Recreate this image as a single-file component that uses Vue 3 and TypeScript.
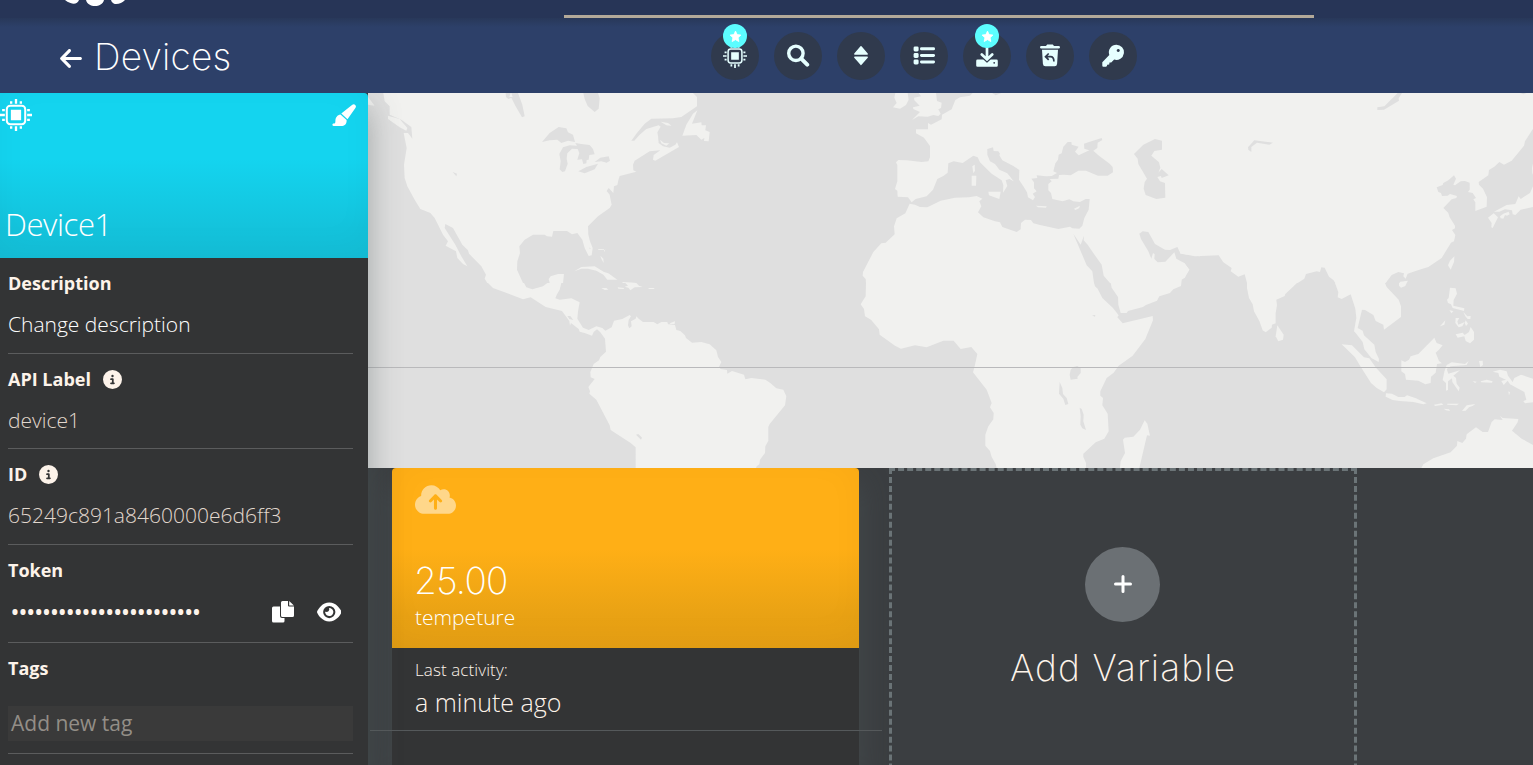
<script setup lang="ts">
import { h, type FunctionalComponent } from 'vue'

const tools = ['chip', 'search', 'sort', 'list', 'download', 'trash', 'key'] as const
const starred: string[] = ['chip', 'download']
const token = '•'.repeat(24)

const infoPath =
  'M256 512A256 256 0 1 0 256 0a256 256 0 1 0 0 512zM216 336h24V272H216c-13.3 0-24-10.7-24-24s10.7-24 24-24h48c13.3 0 24 10.7 24 24v88h8c13.3 0 24 10.7 24 24s-10.7 24-24 24H216c-13.3 0-24-10.7-24-24s10.7-24 24-24zm40-208a32 32 0 1 1 0 64 32 32 0 1 1 0-64z'

const InfoIcon: FunctionalComponent = () =>
  h('svg', { viewBox: '0 0 512 512', width: 19, height: 19 }, [h('path', { d: infoPath, fill: '#fdf3ea' })])

const ChipIcon: FunctionalComponent<{ size: number }> = (props) =>
  h('svg', { viewBox: '0 0 33 33', width: props.size, height: props.size }, [
    h('rect', { x: 7, y: 7, width: 19, height: 19, rx: 3.6, fill: 'none', stroke: 'currentColor', 'stroke-width': 2.1 }),
    h('path', {
      fill: 'currentColor',
      d: 'M11.2 11.2h10.6v10.6h-10.6zM15.3 0h2.4v5h-2.4zM10.3 2.2h2.4v2.8h-2.4zM20.3 2.2h2.4v2.8h-2.4zM15.3 28h2.4v5h-2.4zM10.3 28h2.4v2.8h-2.4zM20.3 28h2.4v2.8h-2.4zM0 15.3h5v2.4h-5zM2.2 10.3h2.8v2.4h-2.8zM2.2 20.3h2.8v2.4h-2.8zM28 15.3h5v2.4h-5zM28 10.3h2.8v2.4h-2.8zM28 20.3h2.8v2.4h-2.8z',
    }),
  ])
ChipIcon.props = ['size']

interface Tile {
  x: number
  y: number
  land: string[]
  water: string[]
}

// Coastlines are drawn per region, at three units per pixel.
const tiles: Tile[] = [
  {
    x: 0,
    y: 0,
    land: [
      '46,0 975,0 987,12 987,40 940,72 915,76 850,77 830,92 805,122 790,143 799,143 815,125 835,108 872,97 878,101 868,118 870,128 872,150 885,160 905,164 922,155 927,148 933,162 885,190 862,203 855,200 857,186 877,172 845,175 800,203 795,215 796,232 805,236 755,249 751,262 748,276 738,280 736,300 722,285 716,294 725,305 731,335 725,345 690,370 660,400 661,425 666,445 674,465 671,487 662,489 650,465 643,440 628,420 612,424 597,414 556,414 552,431 537,430 530,425 495,425 470,440 454,460 456,480 448,505 447,530 465,570 358,570 350,557 354,545 340,520 303,482 300,472 283,455 255,405 232,393 230,405 262,455 280,490 298,520 285,513 268,495 264,475 233,458 240,445 225,425 200,375 187,360 157,348 140,320 118,280 110,255 108,215 116,165 107,120 120,120 133,137 130,102 100,80 65,65 65,40 50,25',
      '60,68 95,78 118,105 115,113 95,103 60,78',
      '988,52 972,92 1000,88 1001,97 1014,97 1012,112 1025,117 1022,145 1008,144 1009,135 1000,140 985,126 943,128 955,95 975,62',
      '878,86 900,90 911,98 895,97',
      '876,140 888,150 904,151 895,158 880,151',
      '619,535 640,522 680,520 708,537 721,541 748,560 718,560 706,545 685,533 660,527 640,527',
      '545,570 542,558 548,550 570,543 588,543 585,570',
      '690,468 708,469 710,478 712,467 712,471 692,471', '697,488 706,497 707,510 700,497', '762,567 805,569 790,570 765,570', '0,12 20,38 0,35',
    ],
    water: [
      '522,147 545,120 572,102 595,106 600,118 615,125 621,147 600,143 580,150 568,140 545,142',
      '574,183 585,163 605,157 627,158 622,150 640,153 665,156 675,168 680,184 664,186 662,200 656,201 655,211 646,213 642,199 628,200 634,180 629,168 612,167 598,181 596,197 599,212 591,235 583,237 575,229 578,205',
      '631,235 655,222 690,212 680,229 650,241', '680,207 697,194 722,190 726,203 716,209 700,205',
      '254,237 267,242 265,250', '413,0 414,12 421,18 430,14 442,38 462,73 470,70 463,35 450,0 430,0 434,12 424,12 428,0',
      '646,0 650,18 659,39 680,57 692,47 695,15 690,0', '663,464 668,465 666,468',
    ],
  },
  {
    x: 0,
    y: 190,
    land: [
      '360,0 468,0 475,13 493,19 525,10 538,0 580,0 575,20 567,34 562,46 575,50 610,46 635,58 630,85 628,107 645,134 662,141 685,130 703,135 712,143 731,133 738,113 763,108 785,96 789,100 782,111 780,127 784,136 791,130 789,115 803,107 805,100 812,107 825,117 857,117 868,124 880,117 898,117 900,124 921,126 925,141 937,144 951,157 954,165 972,179 1000,177 1025,184 1045,202 1050,222 1060,237 1053,252 1058,258 1077,261 1078,272 1092,264 1128,275 1132,289 1150,285 1192,290 1207,300 1225,316 1246,320 1255,340 1251,367 1205,423 1201,432 1201,473 1192,490 1191,510 1176,530 1174,544 1166,550 1164,555 803,555 803,493 788,480 728,441 725,427 685,350 664,332 666,325 661,312 680,288 668,283 667,267 677,243 693,232 697,222 714,206 711,167 697,148 687,139 677,147 672,158 650,150 635,146 632,138 609,120 606,128 604,114 582,84 533,72 488,43 465,49 410,28 375,15',
      '772,0 805,0 813,8 824,12 800,13 787,22 781,14 770,11 780,8', '700,15 715,15 721,20 710,21', '749,13 768,15 767,18 751,17', '840,15 857,15 860,18 844,18', '909,119 921,115 920,123 904,124',
    ],
    water: ['598,99 607,99 616,111 604,108', '804,455 811,453 822,464 819,470'],
  },
  {
    x: 472,
    y: 0,
    land: [
      '376,0 1080,0 1080,490 1022,482 1012,462 990,471 975,470 945,453 925,417 908,415 898,422 903,438 925,475 934,497 939,480 944,484 943,498 953,508 976,506 1003,478 1009,497 1034,511 1048,530 1037,545 1035,554 1024,560 1023,570 810,570 791,548 785,515 762,483 743,455 731,442 732,428 722,455 700,422 740,517 757,535 762,570 78,570 77,558 68,548 69,537 100,477 124,451 137,449 164,424 162,400 170,376 196,361 209,332 225,335 240,342 262,343 302,323 345,314 387,313 410,309 427,317 418,325 424,340 414,358 430,373 465,385 480,388 487,402 530,417 542,409 543,390 555,380 573,381 580,391 600,396 655,408 690,401 697,406 718,407 727,398 733,375 746,350 749,318 737,318 720,327 700,325 688,319 668,325 637,318 633,300 625,292 625,273 635,265 629,258 655,257 657,246 671,245 692,247 715,233 738,233 774,248 803,248 819,238 818,222 809,212 775,187 760,173 772,165 773,149 787,141 785,135 745,148 732,152 733,167 748,172 716,187 705,176 716,161 695,155 694,147 683,147 670,161 665,181 656,185 654,200 646,211 640,235 651,240 635,249 618,250 590,247 592,255 574,257 582,268 582,286 590,295 578,302 585,312 579,322 564,313 561,298 550,280 537,260 538,231 520,219 487,202 478,187 480,182 475,175 461,174 459,163 442,168 442,185 450,205 465,213 478,230 502,241 521,265 508,258 497,262 502,279 489,299 490,276 485,262 455,242 420,208 413,193 400,188 368,210 341,205 325,211 323,239 310,249 292,258 279,290 260,310 227,318 215,328 204,313 173,311 172,293 165,288 172,265 172,216 168,208 175,201 200,202 245,207 265,205 270,193 270,159 252,134 228,121 228,109 264,109 264,90 273,95 305,79 306,65 335,49 346,21 360,13 390,8 398,0',
      '166,0 203,0 206,20 198,36 180,47 159,43 170,30 163,14', '236,0 288,0 291,24 305,29 303,45 295,49 302,62 295,69 280,66 263,71 235,70 216,81 240,57 220,48 219,43 239,38 223,22 222,14 243,10',
      '395,248 409,248 408,278 395,278', '397,220 404,215 405,233 400,241', '445,296 482,296 478,318 447,307', '588,338 620,340 618,344 594,343', '702,347 720,338 717,346 706,351',
    ],
    water: ['882,183 910,155 945,138 966,143 966,170 943,174 934,188 957,208 961,224 955,239 965,228 986,247 965,255 963,249 952,252 960,265 975,270 976,314 949,318 917,306 911,287 914,267 921,257 895,213 893,197', '456,0 467,7 484,0'],
  },
  {
    x: 472,
    y: 190,
    land: [
      '78,0 762,0 765,10 773,17 787,45 819,75 836,97 832,103 848,121 938,99 939,112 916,168 878,218 836,248 821,269 800,285 781,325 781,338 789,345 787,367 803,392 806,445 793,467 767,478 730,512 730,522 738,540 738,555 470,555 467,543 455,522 450,504 436,488 436,455 445,430 460,409 461,390 450,373 455,360 440,320 399,268 405,245 412,213 394,192 362,198 341,173 310,173 260,193 225,187 183,197 165,188 119,155 117,139 93,110 75,100 72,78 62,64 77,40',
      '812,0 1024,0 1023,9 1000,19 990,30 958,40 951,53 918,66 909,72 864,84 860,90 842,90 835,65 834,42 815,14', '914,412 922,422 930,458 921,457 898,555 840,555 842,535 855,510 849,470 854,464 880,461 900,440',
    ],
    water: ['692,260 700,252 712,249 722,256 722,270 712,282 713,287 692,290 689,275', '659,297 667,315 669,333 680,345 685,363 676,366 670,347 657,332', '719,374 725,378 731,395 730,415 738,441 727,436 721,425 722,400', '756,97 766,96 765,101'],
  },
  {
    x: 812,
    y: 0,
    land: [
      '0,0 1059,0 1059,107 1035,145 1032,158 995,203 972,215 958,207 943,221 927,231 925,247 896,267 897,275 909,287 921,313 920,341 886,354 886,328 880,319 888,315 878,300 864,297 869,290 869,269 855,264 842,265 825,277 820,275 828,257 822,247 805,262 790,270 788,276 770,283 775,297 783,300 786,309 803,308 810,303 831,309 829,315 815,319 790,345 805,360 809,373 825,398 825,406 816,411 826,426 822,445 813,449 785,495 745,522 723,529 700,536 683,542 677,557 670,550 672,541 655,537 635,546 617,570 466,570 460,561 447,551 434,524 424,523 420,537 410,535 378,543 373,557 353,570 201,570 194,544 175,551 152,535 155,525 130,508 116,487 45,490 0,481',
      '0,508 12,510 28,530 15,553 5,557 4,570 0,570', '823,490 822,507 812,530 804,517 810,503', '1059,212 1056,225 1057,240 1059,245',
      '1059,280 1050,300 1022,318 1016,310 1006,333 980,336 942,356 958,356 975,349 996,352 998,364 1006,366 1022,350 1059,342', '924,374 941,361 954,373 938,405 934,403 935,390', '960,370 970,362 986,356 989,364 981,368 975,366 970,377 962,376', '658,570 661,566 684,563 680,570',
    ],
    water: ['204,163 223,142 263,147 279,149 268,155 231,149 214,162 214,177 205,170', '592,43 613,40 653,0 666,0 656,16 657,23 612,50 592,51', '1020,0 1030,4 1040,0'],
  },
  {
    x: 812,
    y: 190,
    land: [
      '201,0 351,0 316,33 314,39 289,50 291,67 287,90 287,121 276,125 275,134 257,148 248,142 238,114 222,85 218,64 207,45 201,15', '292,127 311,155 309,170 295,175 287,160',
      '465,0 615,0 620,12 656,50 663,70 663,102 612,140 610,125 587,114 580,96 555,81 546,80 533,135 548,143 552,157 583,185 587,207 597,228 596,237 574,225 553,199 548,177 527,150 522,145 529,105 526,77 512,34 485,48 473,43 475,28',
      '485,184 516,187 552,223 568,226 588,254 620,289 620,319 612,328 590,315 573,300 541,250 525,223', '618,331 636,332 655,342 674,342 681,337 706,345 740,361 730,364 700,357 660,354 638,351 617,341',
      '664,232 675,237 687,230 692,220 715,213 763,164 770,180 788,187 777,200 767,209 777,234 786,241 771,243 767,269 753,281 752,300 736,304 715,293 678,290 675,273 664,265',
      '657,0 680,0 676,9 663,14 657,8', '810,14 827,16 831,32 821,51 820,68 853,76 852,84 818,75 813,64 804,60 801,50 806,45', '850,87 862,100 872,99 871,108 863,108 856,100',
      '827,105 838,105 832,115 835,125 854,117 847,130 836,133 826,120', '857,112 864,122 858,129 854,120', '808,82 820,84 815,91', '780,130 796,112 793,125', '827,154 848,149 854,156 867,147 872,132 882,147 882,170 870,181 857,174 853,160 833,164',
      '815,238 855,243 866,234 860,246 812,250 800,258 805,272 840,262 820,278 828,285 830,302 839,314 836,325 817,297 816,286 804,295 804,321 798,323 798,300 788,291 793,266 800,246', '897,234 908,233 909,246 901,252',
      '938,266 960,260 980,265 984,278 998,297 1003,285 1023,275 1059,287 1059,358 1035,361 1030,355 1039,350 1033,327 990,304 983,293 971,306 964,294 978,290 958,281 955,270', '878,294 890,296 885,300', '902,295 920,290 938,295 936,299 903,298', '985,325 990,328 987,337',
      '762,365 785,361 790,365 765,369', '802,362 837,362 830,367 802,365', '791,377 807,379 810,384 798,382', '846,384 860,367 886,363 879,368 867,373 857,383',
      '960,398 968,405 1015,408 1013,418 996,443 1025,467 1059,486 1059,555 724,555 730,544 760,526 812,508 831,488 832,474 847,480 858,467 860,454 888,433 908,447 924,447 935,417 944,409 968,411',
    ],
    water: [],
  },
]
</script>

<template>
  <div class="page">
    <div class="topbar">
      <svg class="logo" viewBox="0 0 62 7" width="62" height="7">
        <path d="M2 0h14c-1 3.500-5 4.500-8.500 3Q4 2 2 0zM23 0h18c-2 8-16 8-18 0zM48 0H62c-3 3-7 4.500-11 3.700Q48.500 3 48 0z" fill="#fff" />
      </svg>
      <div class="banner-edge"></div>
    </div>

    <header class="header">
      <div class="title">
        <svg class="back" viewBox="0 0 448 512" width="22" height="25">
          <path fill="#fff" d="M9.400 233.400c-12.500 12.500-12.500 32.800 0 45.300l160 160c12.500 12.500 32.800 12.500 45.300 0s12.500-32.800 0-45.300L109.200 288 416 288c17.700 0 32-14.300 32-32s-14.300-32-32-32l-306.700 0L214.600 118.600c12.500-12.500 12.500-32.800 0-45.300s-32.800-12.500-45.300 0l-160 160z" />
        </svg>
        <h1>Devices</h1>
      </div>
      <nav class="tools">
        <button v-for="tool in tools" :key="tool" class="tool" :aria-label="tool">
          <span v-if="starred.includes(tool)" class="badge">
            <svg viewBox="0 0 24 24" width="13" height="13"><path fill="#fff" stroke="#fff" stroke-width="1.500" stroke-linejoin="round" d="M12 2l3 6.500 7 .9-5.200 4.900 1.400 7L12 17.800l-6.200 3.500 1.400-7L2 9.400l7-.9z" /></svg>
          </span>
          <ChipIcon v-if="tool === 'chip'" :size="24" />
          <svg v-else viewBox="0 0 24 24" width="24" height="24">
            <g v-if="tool === 'search'" fill="none" stroke="currentColor">
              <circle cx="9.900" cy="9.300" r="7.200" stroke-width="3.400" />
              <path d="M15.200 14.700l6 6" stroke-width="4" stroke-linecap="round" />
            </g>
            <path v-else-if="tool === 'sort'" fill="currentColor" stroke="currentColor" stroke-width="1.400" stroke-linejoin="round" d="M12 2.800l6.200 7.200H5.800zM12 20.400l-6.200-7.200h12.400z" />
            <g v-else-if="tool === 'list'" fill="currentColor">
              <rect x="1.600" y="2.400" width="5" height="5" rx="1.400" /><rect x="1.600" y="9" width="5" height="5" rx="1.400" /><rect x="1.600" y="15.400" width="5" height="5" rx="1.400" />
              <rect x="8" y="3.300" width="15" height="3" rx="1.400" /><rect x="8" y="9.900" width="15" height="3" rx="1.400" /><rect x="8" y="16.400" width="15" height="3" rx="1.400" />
            </g>
            <g v-else-if="tool === 'download'">
              <path d="M2.500 15.600h6l3.500 3 3.500-3h6q1.300 0 1.300 1.300v4.600q0 1.300-1.300 1.300h-19q-1.300 0-1.300-1.300v-4.600q0-1.300 1.300-1.300z" fill="currentColor" />
              <path d="M5.800 11.800l6.200 6.200 6.200-6.200" fill="none" stroke="#303a4d" stroke-width="1.200" />
              <path d="M12 0v15M6.800 10.500l5.200 5 5.200-5" fill="none" stroke="currentColor" stroke-width="2.700" stroke-linecap="round" />
              <circle cx="19.200" cy="18.800" r=".9" fill="#303a4d" />
            </g>
            <g v-else-if="tool === 'trash'">
              <path fill="currentColor" d="M3.400 1.900H8l1.200-1.500h5.600L16 1.900h4.600q1.400 0 1.400 1.300t-1.400 1.300H3.400Q2 4.500 2 3.200t1.400-1.300zM4 5.700h16l-.9 14q-.2 2.500-2.500 2.500H7.400q-2.300 0-2.500-2.500z" />
              <path fill="none" stroke="#303a4d" stroke-width="1.700" d="M10.700 9.500l-3.200 3.200 3.200 3.200M8 12.700h4.500q3.400 0 3.400 4.800" />
            </g>
            <path v-else fill="currentColor" fill-rule="evenodd" d="M15.400.7a7.600 7.600 0 1 1-2.200 14.900l-3 2.800-1.700.2-.3 1.900-2 .3-.3 1.300-.8.700H2.300q-1 0-1-1v-3.500l7-7.400A7.600 7.600 0 0 1 15.400.7zm1.800 4.200a1.500 1.500 0 1 0 .1 0z" />
          </svg>
        </button>
      </nav>
    </header>

    <div class="body">
      <aside class="sidebar">
        <div class="device">
          <div class="device-top">
            <ChipIcon :size="32" />
            <svg class="brush" viewBox="0 0 24 23" width="24" height="23" fill="#fff">
              <path d="M23.200.9c1 .9.900 2 .2 3.200l-7.900 11.200-6.200-5.700L20 1.100c1-.8 2.200-1.100 3.200-.2zM8.500 10.500l6.100 5.500c.3 3.700-2 6-5.400 6H1.600C0 22 .1 19.600 1.500 19.600c1.600 0 1.900-.9 1.900-2.700 0-3.300 1.900-5.900 5.100-6.400z" />
            </svg>
          </div>
          <div class="device-name">Device1</div>
        </div>

        <section class="row">
          <h2>Description</h2>
          <p class="value bright">Change description</p>
        </section>
        <section class="row short">
          <h2>API Label <InfoIcon /></h2>
          <p class="value">device1</p>
        </section>
        <section class="row">
          <h2>ID <InfoIcon /></h2>
          <p class="value id">65249c891a8460000e6d6ff3</p>
        </section>
        <section class="row token-row">
          <h2>Token</h2>
          <div class="token">
            <span class="dots">{{ token }}</span>
            <svg class="copy" viewBox="0 0 22 22" width="22" height="22">
              <path fill="#fff" d="M1.500 5.500H8V15q0 2 2 2h2.500v3q0 1.500-1.500 1.500H1.500Q0 21.500 0 20V7q0-1.500 1.500-1.500zM10.500 0H16v4.500q0 1 1 1h5v9q0 1.500-1.500 1.500h-10Q9 16 9 14.500v-13Q9 0 10.500 0zM17.200.1l4.700 4.500h-4.700z" />
            </svg>
            <svg class="eye" viewBox="0 0 576 512" width="24.500" height="22">
              <path fill="#fff" d="M288 32c-80.800 0-145.500 36.800-192.600 80.600C48.600 156 17.300 208 2.500 243.700c-3.300 7.900-3.300 16.700 0 24.600C17.300 304 48.600 356 95.400 399.400C142.500 443.200 207.200 480 288 480s145.500-36.800 192.600-80.600c46.800-43.500 78.100-95.400 93-131.100c3.300-7.900 3.300-16.700 0-24.600c-14.900-35.700-46.200-87.700-93-131.100C433.500 68.800 368.800 32 288 32zM144 256a144 144 0 1 1 288 0 144 144 0 1 1 -288 0zm144-64c0 35.300-28.700 64-64 64c-7.100 0-13.900-1.200-20.300-3.300c-5.500-1.800-11.900 1.600-11.700 7.400c.3 6.900 1.300 13.800 3.200 20.700c13.700 51.200 66.400 81.600 117.600 67.900s81.600-66.400 67.900-117.600c-11.100-41.500-47.800-69.400-88.600-71.100c-5.800-.2-9.200 6.100-7.400 11.700c2.100 6.400 3.300 13.200 3.300 20.300z" />
            </svg>
          </div>
        </section>
        <section class="row tags-row">
          <h2>Tags</h2>
          <div class="tag-input">Add new tag</div>
        </section>
      </aside>

      <main class="main">
        <svg class="map" viewBox="0 0 1165 375" width="1165" height="375">
          <g v-for="tile in tiles" :key="`${tile.x}-${tile.y}`" :transform="`translate(${tile.x} ${tile.y}) scale(0.333333)`">
            <polygon v-for="shape in tile.land" :key="shape" :points="shape" fill="#f1f1ef" />
            <polygon v-for="shape in tile.water" :key="shape" :points="shape" fill="#dfdfdf" />
          </g>
          <path d="M0 274.500H1165" stroke="#b9b9bb" />
        </svg>

        <div class="variables">
          <article class="card">
            <div class="card-head">
              <svg viewBox="0 0 640 512" width="41" height="33">
                <path fill="#ffd78a" d="M144 480C64.500 480 0 415.500 0 336c0-62.800 40.200-116.200 96.200-135.900c-.1-2.700-.2-5.400-.2-8.100c0-88.400 71.600-160 160-160c59.300 0 111 32.200 138.700 80.200C409.900 102 428.300 96 448 96c53 0 96 43 96 96c0 12.200-2.300 23.800-6.400 34.600C596 238.400 640 290.100 640 352c0 70.700-57.300 128-128 128H144zm79-217c-9.400 9.400-9.400 24.600 0 33.900s24.600 9.400 33.900 0l39-39V392c0 13.300 10.700 24 24 24s24-10.700 24-24V257.900l39 39c9.400 9.400 24.600 9.400 33.900 0s9.400-24.600 0-33.900l-80-80c-9.400-9.400-24.600-9.400-33.900 0l-80 80z" />
              </svg>
              <div class="reading">25.00</div>
              <div class="reading-name">tempeture</div>
            </div>
            <div class="card-body">
              <div class="activity-label">Last activity:</div>
              <div class="activity">a minute ago</div>
              <hr />
            </div>
          </article>

          <article class="add">
            <div class="plus">
              <svg viewBox="0 0 18 18" width="18" height="18"><path d="M9 1.500v15M1.500 9h15" stroke="#fff" stroke-width="3" stroke-linecap="round" /></svg>
            </div>
            <div class="add-label">Add Variable</div>
          </article>
        </div>
      </main>
    </div>
  </div>
</template>

<style>
html,
body {
  overflow: hidden;
}
</style>

<style scoped>
* {
  box-sizing: border-box;
}
svg {
  display: block;
  flex: none;
}
.page {
  width: 1533px;
  height: 765px;
  overflow: hidden;
  display: flex;
  flex-direction: column;
  font-family: 'Open Sans', sans-serif;
  font-weight: 300;
  color: #fdf3ea;
  background: #3b3e41;
}
.topbar {
  height: 18px;
  flex: none;
  display: flex;
  background: #273557;
}
.logo {
  margin-left: 63px;
}
.banner-edge {
  width: 750px;
  height: 3px;
  margin: 15px 0 0 439px;
  background: #b3a999;
}
.header {
  height: 75px;
  flex: none;
  display: flex;
  background: linear-gradient(#283859, #2d4069 9px);
}
.title {
  width: 711px;
  display: flex;
  padding-left: 60px;
}
.back {
  margin-top: 28px;
}
h1 {
  margin: 14px 0 0 12px;
  font: 240 37px/49px Inter, sans-serif;
  letter-spacing: 0.2px;
  color: #fff;
}
.tools {
  display: flex;
  gap: 15px;
  padding-top: 14px;
}
.tool {
  position: relative;
  width: 48px;
  height: 48px;
  border: 0;
  padding: 0;
  border-radius: 50%;
  background: #303a4d;
  color: #e6ffff;
  display: flex;
  align-items: center;
  justify-content: center;
}
.badge {
  position: absolute;
  left: 12px;
  top: -8px;
  width: 24px;
  height: 24px;
  border-radius: 50%;
  background: #5cfdff;
  display: flex;
  align-items: center;
  justify-content: center;
}
.body {
  flex: 1;
  min-height: 0;
  display: flex;
}
.sidebar {
  position: relative;
  z-index: 1;
  width: 368px;
  height: 690px;
  flex: none;
  background: #333435;
  box-shadow: 0 15px 30px rgba(80, 90, 92, 0.45);
  clip-path: inset(0 -60px 0 0);
}
.device {
  height: 165px;
  border-radius: 0 4px 0 0;
  background: linear-gradient(#14d4ef 40%, #14c3dc 82%, #14c0d9);
  box-shadow: inset 0 -10px 40px -8px rgba(0, 0, 0, 0.05);
}
.device-top {
  display: flex;
  justify-content: space-between;
  padding: 6px 12px 0 0;
  height: 110px;
  color: #fff;
}
.brush {
  margin-top: 5px;
}
.device-name {
  padding-left: 5px;
  font-size: 31px;
  line-height: 42px;
  letter-spacing: -0.4px;
  color: #fff;
}
.row {
  height: 96px;
  margin: 0 15px 0 8px;
  border-bottom: 1px solid #5b5c5d;
  padding-top: 13px;
}
.row.short {
  height: 95px;
}
.row h2 {
  margin: 0;
  display: flex;
  align-items: center;
  gap: 12px;
  font-size: 18px;
  font-weight: 700;
  line-height: 25px;
}
.value {
  margin: 13px 0 0;
  font-size: 21px;
  line-height: 30px;
  color: #e2d8ce;
}
.bright {
  color: #fff;
}
.token-row {
  height: 98px;
}
.token {
  display: flex;
  align-items: center;
  height: 30px;
  margin-top: 14px;
  padding-right: 12px;
}
.dots {
  width: 264px;
  padding-left: 3px;
  font-size: 21px;
  font-weight: 600;
  color: #fdf3ea;
}
.eye {
  margin-left: 23px;
}
.tags-row {
  height: 111px;
}
.tag-input {
  height: 35px;
  margin-top: 25px;
  padding-left: 3px;
  background: #3a3a3a;
  color: #938e87;
  font-size: 21px;
  font-weight: 400;
  line-height: 34px;
}
.main {
  flex: 1;
  min-width: 0;
}
.map {
  background: #dfdfdf;
}
.variables {
  display: flex;
  gap: 30px;
  padding-left: 24px;
  height: 297px;
}
.card {
  width: 467px;
  background: #333435;
  border-radius: 4px 4px 0 0;
  box-shadow: 0 15px 30px rgba(80, 90, 92, 0.45);
  clip-path: inset(0 -60px 0 -60px);
}
.card-head {
  height: 180px;
  border-radius: 4px 4px 0 0;
  padding: 15px 23px 0;
  background: linear-gradient(#ffaf16 45%, #e9a214 82%, #e7a014);
  box-shadow: inset 0 -10px 40px -8px rgba(0, 0, 0, 0.05);
  color: #fff;
}
.reading {
  margin: 41px 0 0 -1px;
  font: 240 37px/48px Inter, sans-serif;
  letter-spacing: -0.7px;
}
.reading-name {
  margin-top: -3px;
  font-size: 21px;
  line-height: 30px;
}
.card-body {
  padding: 9px 0 0 23px;
}
.activity-label {
  font-size: 17px;
  line-height: 25px;
  letter-spacing: 0.1px;
}
.activity {
  margin-top: 3px;
  font-size: 25px;
  line-height: 34px;
}
hr {
  margin: 11px -23px 0 -45px;
  border: 0;
  height: 1px;
  background: #55595b;
}
.add {
  width: 468px;
  height: 400px;
  border: 3px dashed #6b7477;
  display: flex;
  flex-direction: column;
  align-items: center;
  padding-top: 76px;
}
.plus {
  width: 75px;
  height: 75px;
  margin-right: 1px;
  border-radius: 50%;
  background: #6b7074;
  display: flex;
  align-items: center;
  justify-content: center;
}
.plus svg {
  margin-top: -1px;
}
.add-label {
  margin-top: 21px;
  font: 240 37px/50px Inter, sans-serif;
  letter-spacing: 1.1px;
}
</style>
